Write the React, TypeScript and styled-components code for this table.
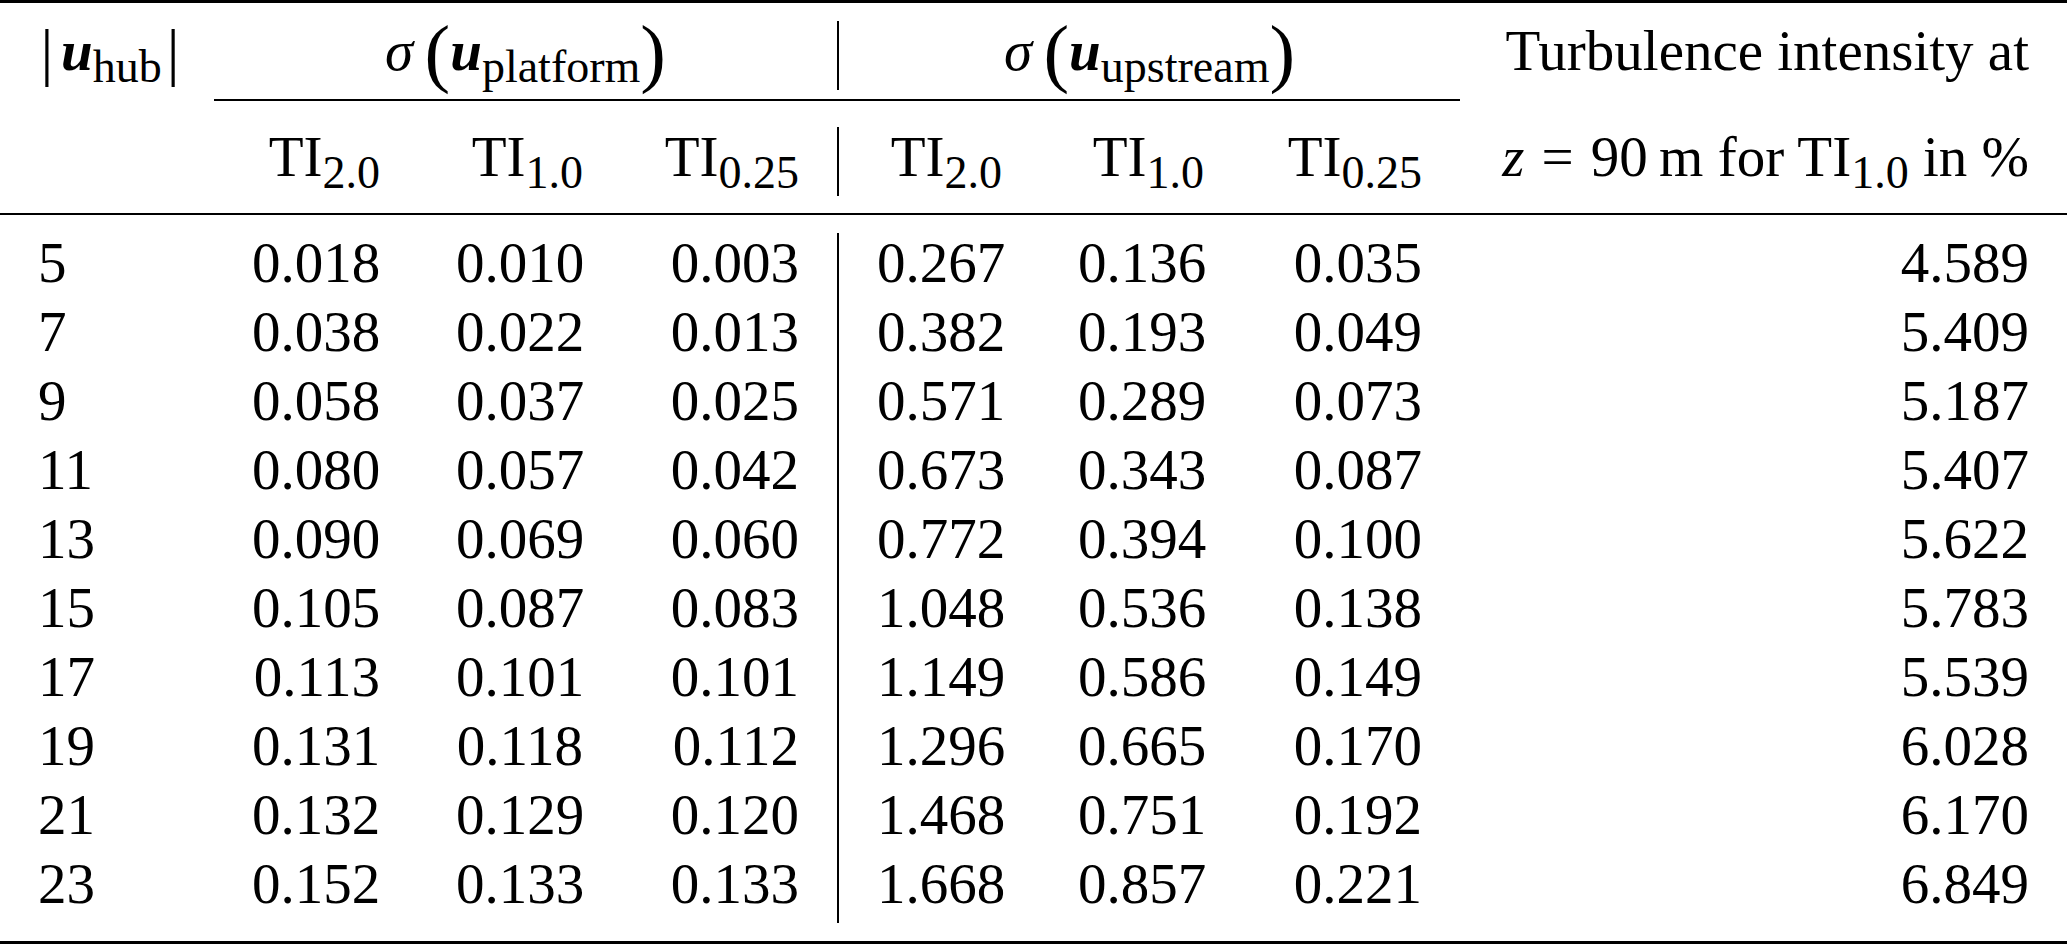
import { Fragment } from "react";
import styled, { createGlobalStyle } from "styled-components";

const GlobalStyle = createGlobalStyle`
  html, body {
    margin: 0;
    padding: 0;
    background: #ffffff;
  }
  body {
    font-family: "Liberation Serif", "Times New Roman", serif;
    color: #000000;
  }
`;

// column widths measured off the typeset table (l, 6 x r, r)
const COLUMNS = "214px 204px 203px 216px 203px 202px 218px 607px";

const Table = styled.div`
  display: grid;
  grid-template-columns: ${COLUMNS};
  width: 2067px;
  font-size: 57px;
`;

const Rule = styled.div<{
  $weight: number;
  $above?: number;
  $below?: number;
  $from?: number;
  $to?: number;
}>`
  grid-column: ${(p) => p.$from ?? 1} / ${(p) => p.$to ?? -1};
  height: ${(p) => p.$weight}px;
  margin-top: ${(p) => p.$above ?? 0}px;
  margin-bottom: ${(p) => p.$below ?? 0}px;
  background: #000000;
`;

// empty slot beside a partial rule, so the next row starts on a fresh line
const Gap = styled.div``;

const Cell = styled.div<{
  $align?: "left" | "right" | "center";
  $divider?: boolean;
  $span?: number;
}>`
  grid-column: span ${(p) => p.$span ?? 1};
  box-sizing: border-box;
  height: 69px;
  padding: 0 38px 9px;
  line-height: 60px;
  white-space: nowrap;
  text-align: ${(p) => p.$align ?? "right"};
  border-left: ${(p) => (p.$divider ? "2px solid #000000" : "none")};
`;

const Vec = styled.i`
  font-weight: bold;
`;

const Var = styled.i``;

const Sub = styled.span`
  font-size: 46px;
  line-height: 0;
  vertical-align: -0.25em;
`;

const Paren = styled.span`
  font-size: 1.35em;
  line-height: 0;
  vertical-align: -0.1em;
`;

const Abs = styled.span`
  font-size: 1.12em;
  line-height: 0;
  vertical-align: -0.05em;
  margin: 0 0.12em 0 0.04em;

  &:last-child {
    margin: 0 0.04em 0 0.08em;
  }
`;

const Op = styled.span`
  margin: 0 0.3em;
`;

const TI = ({ sub }: { sub: string }) => (
  <>
    TI<Sub>{sub}</Sub>
  </>
);

const Sigma = ({ of }: { of: string }) => (
  <>
    <Var>σ</Var>
    {"\u2009"}
    <Paren>(</Paren>
    <Vec>u</Vec>
    <Sub>{of}</Sub>
    <Paren>)</Paren>
  </>
);

const rows: [string, string[]][] = [
  ["5", ["0.018", "0.010", "0.003", "0.267", "0.136", "0.035", "4.589"]],
  ["7", ["0.038", "0.022", "0.013", "0.382", "0.193", "0.049", "5.409"]],
  ["9", ["0.058", "0.037", "0.025", "0.571", "0.289", "0.073", "5.187"]],
  ["11", ["0.080", "0.057", "0.042", "0.673", "0.343", "0.087", "5.407"]],
  ["13", ["0.090", "0.069", "0.060", "0.772", "0.394", "0.100", "5.622"]],
  ["15", ["0.105", "0.087", "0.083", "1.048", "0.536", "0.138", "5.783"]],
  ["17", ["0.113", "0.101", "0.101", "1.149", "0.586", "0.149", "5.539"]],
  ["19", ["0.131", "0.118", "0.112", "1.296", "0.665", "0.170", "6.028"]],
  ["21", ["0.132", "0.129", "0.120", "1.468", "0.751", "0.192", "6.170"]],
  ["23", ["0.152", "0.133", "0.133", "1.668", "0.857", "0.221", "6.849"]],
];

const subs = ["2.0", "1.0", "0.25"];

export default function App() {
  return (
    <>
      <GlobalStyle />
      <Table>
        <Rule $weight={3} $below={18} />

        <Cell $align="left">
          <Abs>|</Abs>
          <Vec>u</Vec>
          <Sub>hub</Sub>
          <Abs>|</Abs>
        </Cell>
        <Cell $align="center" $span={3}>
          <Sigma of="platform" />
        </Cell>
        <Cell $align="center" $span={3} $divider>
          <Sigma of="upstream" />
        </Cell>
        <Cell>Turbulence intensity at</Cell>

        <Gap />
        <Rule $weight={2} $above={9} $below={26} $from={2} $to={8} />
        <Gap />

        <Cell $align="left" />
        {[...subs, ...subs].map((s, i) => (
          <Cell key={i} $divider={i === 3}>
            <TI sub={s} />
          </Cell>
        ))}
        <Cell>
          <Var>z</Var>
          <Op>=</Op>90{"\u2009"}m for <TI sub="1.0" /> in %
        </Cell>

        <Rule $weight={2} $above={17} $below={18} />

        {rows.map(([hub, values]) => (
          <Fragment key={hub}>
            <Cell $align="left">{hub}</Cell>
            {values.map((v, i) => (
              <Cell key={i} $divider={i === 3}>
                {v}
              </Cell>
            ))}
          </Fragment>
        ))}

        <Rule $weight={3} $above={18} />
      </Table>
    </>
  );
}
